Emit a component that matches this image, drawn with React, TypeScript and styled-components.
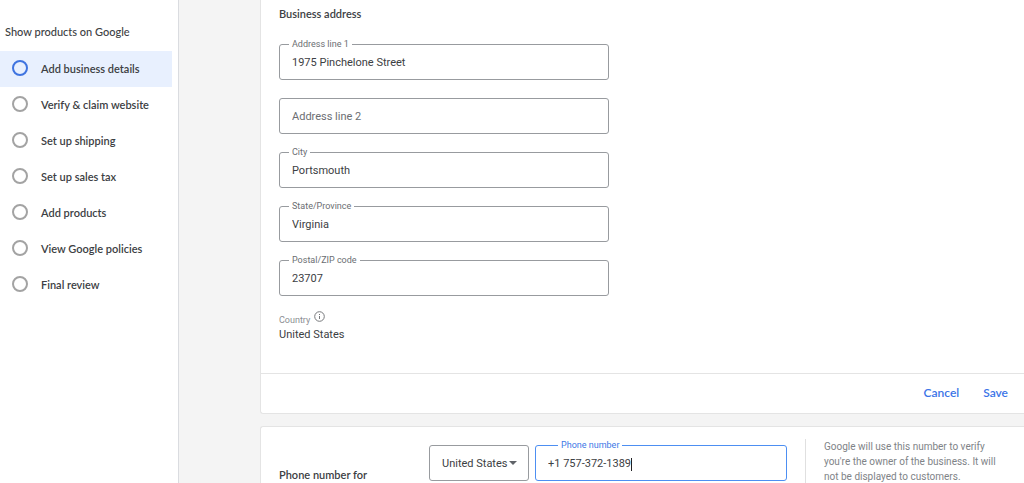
import React from "react";
import styled, { createGlobalStyle } from "styled-components";

const ui = '"Lato", "Liberation Sans", sans-serif';
const text = '"Roboto", "Liberation Sans", sans-serif';

const GlobalStyle = createGlobalStyle`
  *, *::before, *::after { box-sizing: border-box; }
  body { margin: 0; background: #f4f4f4; color: #3c4043; font-family: ${text}; font-size: 11px; }
  input, select, button { font: inherit; }
`;

const Page = styled.div`
  display: flex;
  height: 100vh;
  overflow: hidden;
`;

const Sidebar = styled.aside`
  flex: 0 0 179px;
  padding: 24px 6px 0 0;
  background: #fff;
  border-right: 1px solid #dadce0;
  font-family: ${ui};
`;

const SidebarTitle = styled.h2`
  margin: 0 0 11px;
  padding-left: 5px;
  font-size: 11px;
  font-weight: 500;
  line-height: 16px;
  color: #3c4043;
`;

const Steps = styled.ul`
  margin: 0;
  padding: 0;
  list-style: none;
`;

const StepLink = styled.a<{ $active?: boolean }>`
  display: flex;
  align-items: center;
  gap: 13px;
  height: 36px;
  padding: 0 0 2px 12px;
  background: ${(p) => (p.$active ? "#e8f0fe" : "transparent")};
  color: #3c4043;
  font-weight: 600;
  text-decoration: none;

  &::before {
    content: "";
    width: 16px;
    height: 16px;
    border: 2px solid ${(p) => (p.$active ? "#3f74e0" : "#a3a3a3")};
    border-radius: 50%;
  }
`;

const Main = styled.main`
  flex: 1;
  min-width: 0;
  display: flex;
  flex-direction: column;
  gap: 12px;
  padding-left: 81px;
`;

const Card = styled.section`
  background: #fff;
  border: 1px solid #e4e4e4;
  border-right: 0;
`;

const AddressCard = styled(Card)`
  flex: none;
  border-top: 0;
  border-bottom-left-radius: 3px;
`;

const PhoneCard = styled(Card)`
  flex: 1 0 auto;
  display: flex;
  align-items: flex-start;
  padding: 12px 12px 0 18px;
  border-top-left-radius: 3px;
`;

const AddressForm = styled.div`
  padding: 6px 18px 31px;
`;

const Heading = styled.h3`
  margin: 0;
  font-family: ${ui};
  font-size: 11px;
  font-weight: 600;
  line-height: 16px;
`;

const Fields = styled.div`
  display: flex;
  flex-direction: column;
  gap: 18px;
  max-width: 330px;
  margin: 22px 0 16px;
`;

const FieldBox = styled.div<{ $focused?: boolean }>`
  position: relative;
  display: flex;
  align-items: center;
  height: 36px;
  padding: 2px 0 0 12px;
  border: 1px solid ${(p) => (p.$focused ? "#4d8ff2" : "#989b9f")};
  border-radius: 3px;
  background: #fff;
`;

const FieldLabel = styled.label<{ $focused?: boolean }>`
  position: absolute;
  top: -7px;
  left: ${(p) => (p.$focused ? "22px" : "9px")};
  padding: 0 3px;
  background: #fff;
  color: ${(p) => (p.$focused ? "#4078e6" : "#6b6e72")};
  font-size: 9px;
  line-height: 12px;
`;

const TextInput = styled.input<{ $fit?: boolean }>`
  ${(p) => (p.$fit ? "field-sizing: content;" : "flex: 1;")}
  min-width: 0;
  padding: 0;
  border: 0;
  outline: 0;
  background: transparent;
  color: #3c4043;
  line-height: 16px;

  &::placeholder { color: #6b6e72; opacity: 1; }
`;

const Caret = styled.span`
  width: 1px;
  height: 13px;
  background: #202124;
`;

const CountryLabel = styled.div`
  display: flex;
  align-items: center;
  gap: 4px;
  height: 15px;
  color: #8b8e92;
  font-size: 9px;
  line-height: 14px;

  svg { margin-bottom: 6px; }
`;

const CountryValue = styled.div`
  line-height: 15px;
`;

const Actions = styled.footer`
  display: flex;
  align-items: center;
  justify-content: flex-end;
  gap: 24px;
  height: 40px;
  padding: 0 16px 2px 0;
  border-top: 1px solid #e4e4e4;
`;

const TextButton = styled.button`
  padding: 0;
  border: 0;
  background: none;
  color: #3b74e7;
  font-family: ${ui};
  font-size: 12px;
  font-weight: 600;
  line-height: 16px;
`;

const PhoneHeading = styled(Heading)`
  flex: 0 0 150px;
  padding-top: 28px;
`;

const PhoneInputs = styled.div`
  flex: 0 1 358px;
  display: grid;
  grid-template-columns: 100px 1fr;
  gap: 6px;
  padding-top: 6px;
`;

const SelectBox = styled(FieldBox)`
  padding-top: 0;

  svg { position: absolute; right: 11px; pointer-events: none; }
`;

const CountrySelect = styled.select`
  width: 100%;
  padding: 0;
  border: 0;
  outline: 0;
  appearance: none;
  background: transparent;
  color: #3c4043;
`;

const HelpText = styled.p`
  flex: none;
  min-height: 60px;
  margin: 0 0 0 18px;
  padding-left: 18px;
  border-left: 1px solid #e0e0e0;
  color: #808387;
  font-size: 10px;
  line-height: 15px;
`;

const steps = [
  "Add business details",
  "Verify & claim website",
  "Set up shipping",
  "Set up sales tax",
  "Add products",
  "View Google policies",
  "Final review",
];

const addressFields = [
  { id: "line1", label: "Address line 1", value: "1975 Pinchelone Street" },
  { id: "line2", label: "Address line 2", value: "" },
  { id: "city", label: "City", value: "Portsmouth" },
  { id: "state", label: "State/Province", value: "Virginia" },
  { id: "zip", label: "Postal/ZIP code", value: "23707" },
];

function InfoIcon() {
  return (
    <svg width="11" height="11" viewBox="0 0 11 11" fill="none" stroke="#77797c" aria-hidden="true">
      <circle cx="5.5" cy="5.5" r="4.8" />
      <path d="M5.5 5v3M5.5 3v1" />
    </svg>
  );
}

export default function App() {
  return (
    <>
      <GlobalStyle />
      <Page>
        <Sidebar>
          <SidebarTitle>Show products on Google</SidebarTitle>
          <nav>
            <Steps>
              {steps.map((step, i) => (
                <li key={step}>
                  <StepLink href="#" $active={i === 0} aria-current={i === 0 ? "step" : undefined}>
                    {step}
                  </StepLink>
                </li>
              ))}
            </Steps>
          </nav>
        </Sidebar>
        <Main>
          <AddressCard>
            <AddressForm>
              <Heading>Business address</Heading>
              <Fields>
                {addressFields.map((f) => (
                  <FieldBox key={f.id}>
                    {f.value && <FieldLabel htmlFor={f.id}>{f.label}</FieldLabel>}
                    <TextInput
                      id={f.id}
                      defaultValue={f.value}
                      placeholder={f.value ? undefined : f.label}
                      aria-label={f.value ? undefined : f.label}
                    />
                  </FieldBox>
                ))}
              </Fields>
              <CountryLabel>
                Country <InfoIcon />
              </CountryLabel>
              <CountryValue>United States</CountryValue>
            </AddressForm>
            <Actions>
              <TextButton type="button">Cancel</TextButton>
              <TextButton type="button">Save</TextButton>
            </Actions>
          </AddressCard>
          <PhoneCard>
            <PhoneHeading>Phone number for</PhoneHeading>
            <PhoneInputs>
              <SelectBox>
                <CountrySelect aria-label="Phone country" defaultValue="us">
                  <option value="us">United States</option>
                </CountrySelect>
                <svg width="8" height="4" viewBox="0 0 8 4" aria-hidden="true">
                  <path d="M0 0h8L4 4z" fill="#5f6368" />
                </svg>
              </SelectBox>
              <FieldBox $focused>
                <FieldLabel htmlFor="phone" $focused>
                  Phone number
                </FieldLabel>
                <TextInput id="phone" type="tel" $fit defaultValue="+1 757-372-1389" />
                <Caret />
              </FieldBox>
            </PhoneInputs>
            <HelpText>
              Google will use this number to verify
              <br />
              you're the owner of the business. It will
              <br />
              not be displayed to customers.
            </HelpText>
          </PhoneCard>
        </Main>
      </Page>
    </>
  );
}
